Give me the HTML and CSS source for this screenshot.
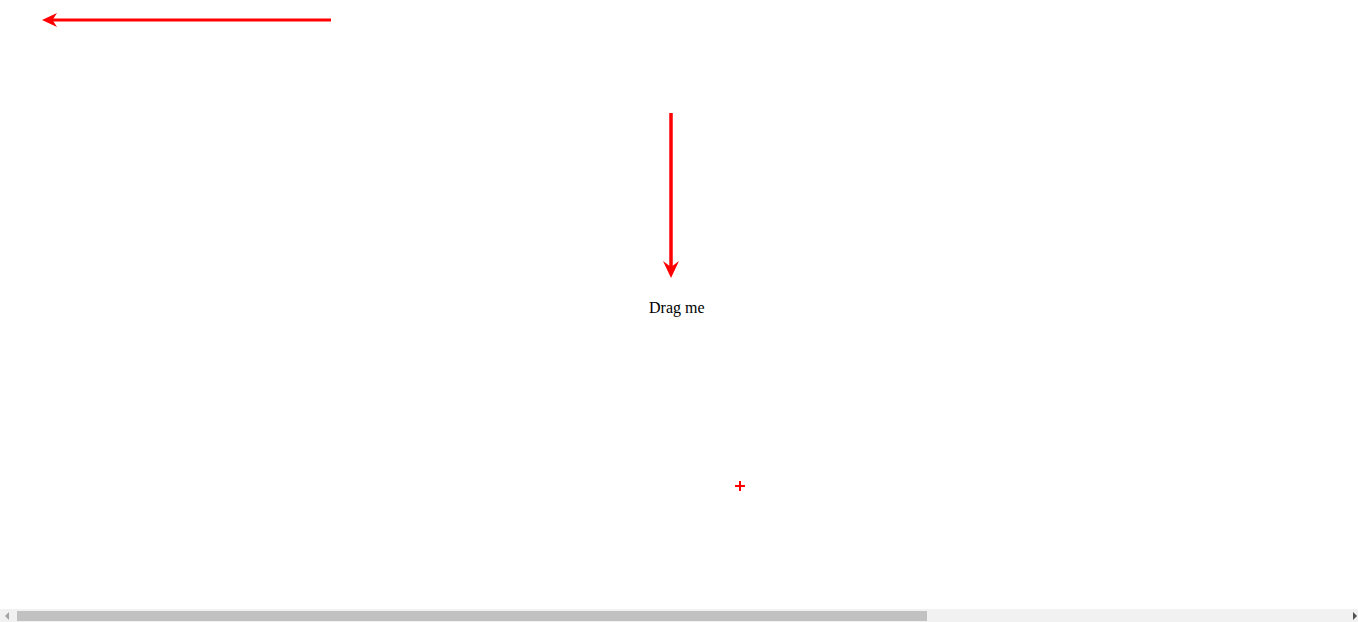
FILE: index.html
```html
<!DOCTYPE html>
<html>
<head>
<meta charset="utf-8">
<link rel="stylesheet" href="styles.css">
</head>
<body>
<div class="canvas">
  <svg class="lines" width="1358" height="622" viewBox="0 0 1358 622">
    <line x1="331" y1="20" x2="52" y2="20" stroke="#ff0000" stroke-width="3"/>
    <path d="M42 20 L57 13 L52.5 20 L57 27 Z" fill="#ff0000"/>
    <line x1="671" y1="113" x2="671" y2="268" stroke="#ff0000" stroke-width="3.5"/>
    <path d="M671 278 L663 261 L671 267 L679 261 Z" fill="#ff0000"/>
    <rect x="735" y="485" width="10" height="2" fill="#ff0000"/>
    <rect x="739" y="481" width="2" height="10" fill="#ff0000"/>
  </svg>
  <div class="drag">Drag me</div>
</div>
<div class="hscroll">
  <div class="btn btn-left"><span class="tri tri-left"></span></div>
  <div class="track">
    <div class="thumb"></div>
  </div>
  <div class="btn btn-right"><span class="tri tri-right"></span></div>
</div>
</body>
</html>
```
FILE: styles.css
```css
html, body {
  margin: 0;
  padding: 0;
  background: #ffffff;
  overflow: hidden;
}
.canvas {
  position: relative;
  width: 1358px;
  height: 622px;
  font-family: "Liberation Serif", "Times New Roman", serif;
  font-size: 16px;
  color: #000;
}
.lines {
  position: absolute;
  left: 0;
  top: 0;
}
.drag {
  position: absolute;
  left: 649px;
  top: 299px;
  line-height: 18px;
}
.hscroll {
  position: fixed;
  left: 0;
  bottom: 0;
  width: 1358px;
  height: 13px;
  background: #f1f1f1;
  display: flex;
}
.btn {
  width: 17px;
  height: 13px;
  display: flex;
  align-items: center;
  justify-content: center;
  flex: none;
}
.btn-left { justify-content: flex-start; padding-left: 5px; box-sizing: border-box; }
.btn-right { justify-content: flex-end; padding-right: 1px; box-sizing: border-box; }
.tri {
  width: 0;
  height: 0;
  border-top: 4px solid transparent;
  border-bottom: 4px solid transparent;
}
.tri-left { border-right: 4px solid #a3a3a3; }
.tri-right { border-left: 4px solid #505050; }
.track {
  flex: 1;
  padding: 2px 0 1px 0;
  box-sizing: border-box;
}
.thumb {
  width: 910px;
  height: 10px;
  background: #c1c1c1;
}
```
